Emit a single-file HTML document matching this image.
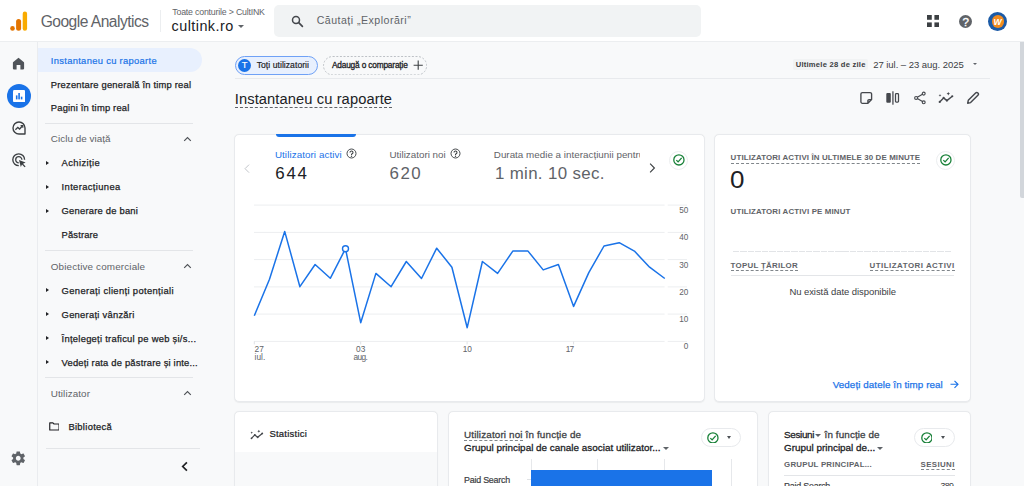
<!DOCTYPE html>
<html lang="ro">
<head>
<meta charset="utf-8">
<title>Google Analytics</title>
<style>
*{box-sizing:border-box;margin:0;padding:0}
html,body{width:1024px;height:486px;overflow:hidden;background:#f8f9fa;font-family:"Liberation Sans",sans-serif;color:#202124}
body{position:relative}
.abs{position:absolute}
.t{position:absolute;white-space:nowrap;line-height:1}
#hdr{position:absolute;left:0;top:0;width:1024px;height:42px;background:#fff;border-bottom:1px solid #eceef0}
#search{position:absolute;left:273.5px;top:5px;width:427px;height:32px;background:#f1f3f4;border-radius:5px}
#rail{position:absolute;left:0;top:42px;width:38px;height:444px;background:#f8f9fa;border-right:1px solid #eaecef}
#nav{position:absolute;left:38px;top:42px;width:196px;height:444px;background:#f8f9fa}
.sel{position:absolute;left:38px;top:48px;width:164px;height:24px;background:#e8f0fe;border-radius:0 12px 12px 0}
.hr{position:absolute;height:1px;background:#e3e5e8}
.tri{position:absolute;width:0;height:0;border-left:3.3px solid #202124;border-top:2.7px solid transparent;border-bottom:2.7px solid transparent}
.dn{position:absolute;width:0;height:0;border-top:3.2px solid #5f6368;border-left:3.1px solid transparent;border-right:3.1px solid transparent}
.card{position:absolute;background:#fff;border:1px solid #e8eaed;border-radius:5px;box-shadow:0 0.5px 1px rgba(60,64,67,.07)}
.dash{position:absolute;height:0;border-top:1px dashed #80868b}
.pill{position:absolute;border-radius:10px;border:1px solid #e8eaed;background:#fff}
.ck{position:absolute;width:19px;height:19px;border-radius:50%;border:1px solid #eceef0;background:#fff}
#sbt{position:absolute;left:1020.3px;top:42.4px;width:3.7px;height:156px;background:#d2d6db;border-radius:0 0 0 2px}
</style>
</head>
<body>

<div id="hdr">
  <svg class="abs" style="left:10px;top:11px" width="18" height="20" viewBox="0 0 18 20">
    <rect x="12.7" y="0.6" width="4.4" height="19.2" rx="2.2" fill="#f9ab00"/>
    <rect x="6.1" y="8" width="5" height="11.8" rx="2.5" fill="#e37400"/>
    <circle cx="2.5" cy="17.4" r="2.3" fill="#e37400"/>
  </svg>
  <div class="t" style="top:14px;font-size:15.6px;color:#5f6368;left:40.70px;letter-spacing:-0.524px;">Google Analytics</div>
  <div class="abs" style="left:160px;top:10px;width:1px;height:22px;background:#eceef0"></div>
  <div class="t" style="top:8px;font-size:8.8px;color:#5f6368;left:172.30px;letter-spacing:-0.203px;">Toate conturile &gt; CultINK</div>
  <div class="t" style="top:19px;font-size:14.4px;color:#202124;left:171.60px;letter-spacing:0.445px;">cultink.ro</div>
  <div class="dn" style="left:237.5px;top:24.9px"></div>
  <div id="search"></div>
  <svg class="abs" style="left:291px;top:15px" width="13" height="13" viewBox="0 0 13 13"><circle cx="5" cy="5" r="3.5" fill="none" stroke="#44474c" stroke-width="1.5"/><path d="M7.7 7.7 L11.4 11.4" stroke="#44474c" stroke-width="1.7" stroke-linecap="round"/></svg>
  <div class="t" style="top:15px;font-size:10.6px;color:#5f6368;left:316.70px;letter-spacing:0.479px;">Căutați „Explorări”</div>
  <svg class="abs" style="left:927.2px;top:15.3px" width="12.2" height="12.2" viewBox="0 0 12 12"><g fill="#3c4043"><rect x="0" y="0" width="4.7" height="4.7"/><rect x="7.3" y="0" width="4.7" height="4.7"/><rect x="0" y="7.3" width="4.7" height="4.7"/><rect x="7.3" y="7.3" width="4.7" height="4.7"/></g></svg>
  <div class="abs" style="left:958.6px;top:14.5px;width:13.6px;height:13.6px;border-radius:50%;background:#5f6368"></div>
  <div class="t" style="top:16px;font-size:11.6px;color:#fff;left:962.40px;-webkit-text-stroke:0.35px #fff;">?</div>
  <div class="abs" style="left:987.8px;top:11.6px;width:19.4px;height:19.4px;border-radius:50%;background:#1b5aa6"></div>
  <div class="abs" style="left:991.6px;top:15.2px;width:12.6px;height:12.6px;border-radius:50%;background:#f28b1e"></div>
  <div class="t" style="top:18px;font-size:8.6px;color:#fff;left:993.60px;font-weight:bold;font-style:italic;">W</div>
</div>

<div id="rail"></div><div id="nav"></div><div class="sel"></div>
<svg class="abs" style="left:12px;top:56.8px" width="13" height="13" viewBox="0 0 13 13"><path d="M0.9 5.9 Q0.9 5.4 1.3 5.1 L6.5 0.7 L11.7 5.1 Q12.1 5.4 12.1 5.9 V11.6 Q12.1 12.4 11.3 12.4 H8.4 V8 H4.6 V12.4 H1.7 Q0.9 12.4 0.9 11.6 Z" fill="#50545a"/></svg>
<div class="abs" style="left:6.5px;top:84px;width:24px;height:24px;border-radius:50%;background:#1a73e8"></div>
<svg class="abs" style="left:12.9px;top:89.9px" width="12.2" height="12.2" viewBox="0 0 12.2 12.2"><rect x="0" y="0" width="12.2" height="12.2" rx="1.4" fill="#fff"/><rect x="2.9" y="5.4" width="1.6" height="4" fill="#1a73e8"/><rect x="5.3" y="3" width="1.6" height="6.4" fill="#1a73e8"/><rect x="7.8" y="6.7" width="1.6" height="2.7" fill="#1a73e8"/></svg>
<svg class="abs" style="left:11.5px;top:121px" width="14.5" height="14" viewBox="0 0 14.5 14"><path d="M7 1 A6 6 0 1 0 7 13 H13 V7 A6 6 0 0 0 7 1 Z" fill="none" stroke="#3c4043" stroke-width="1.4" stroke-linejoin="round"/><path d="M3.4 8.8 L5.8 6.4 L7.6 8 L10.4 5" fill="none" stroke="#3c4043" stroke-width="1.3"/><path d="M8.6 4.6 H10.8 V6.8" fill="none" stroke="#3c4043" stroke-width="1.2"/></svg>
<svg class="abs" style="left:11.5px;top:152.6px" width="15" height="15" viewBox="0 0 15 15"><path d="M12.6 6.8 A5.9 5.9 0 1 0 6.8 12.6" fill="none" stroke="#3c4043" stroke-width="1.35"/><path d="M9.9 6.8 A3.1 3.1 0 1 0 6.8 9.9" fill="none" stroke="#3c4043" stroke-width="1.3"/><path d="M7 7 L13.6 9.4 L11 10.7 L13.6 13.4 L12.6 14.3 L10 11.6 L8.8 14 Z" fill="#3c4043"/></svg>
<svg class="abs" style="left:10.45px;top:450px" width="16.5" height="16.5" viewBox="0 0 24 24"><path fill="#5f6368" d="M19.43 12.98c.04-.32.07-.64.07-.98s-.03-.66-.07-.98l2.11-1.65c.19-.15.24-.42.12-.64l-2-3.46c-.12-.22-.39-.3-.61-.22l-2.49 1c-.52-.4-1.08-.73-1.69-.98l-.38-2.65C14.46 2.18 14.25 2 14 2h-4c-.25 0-.46.18-.49.42l-.38 2.65c-.61.25-1.17.59-1.69.98l-2.49-1c-.23-.09-.49 0-.61.22l-2 3.46c-.13.22-.07.49.12.64l2.11 1.65c-.04.32-.07.65-.07.98s.03.66.07.98l-2.11 1.65c-.19.15-.24.42-.12.64l2 3.46c.12.22.39.3.61.22l2.49-1c.52.4 1.08.73 1.69.98l.38 2.65c.03.24.24.42.49.42h4c.25 0 .46-.18.49-.42l.38-2.65c.61-.25 1.17-.59 1.69-.98l2.49 1c.23.09.49 0 .61-.22l2-3.46c.12-.22.07-.49-.12-.64l-2.11-1.65zM12 15.5c-1.93 0-3.5-1.57-3.5-3.5s1.570-3.500 3.500-3.500 3.500 1.570 3.500 3.500-1.570 3.500-3.500 3.500z"/></svg>

<div class="t" style="top:56px;font-size:9.4px;color:#1a73e8;left:50.80px;letter-spacing:0.312px;-webkit-text-stroke:0.2px #1a73e8;">Instantaneu cu rapoarte</div>
<div class="t" style="top:80px;font-size:9.4px;color:#202124;left:50.80px;letter-spacing:0.202px;-webkit-text-stroke:0.25px #202124;">Prezentare generală în timp real</div>
<div class="t" style="top:103px;font-size:9.4px;color:#202124;left:50.80px;letter-spacing:0.192px;-webkit-text-stroke:0.25px #202124;">Pagini în timp real</div>
<div class="hr" style="left:45px;top:123px;width:148px"></div>
<div class="t" style="top:134px;font-size:9.9px;color:#5f6368;left:50.80px;letter-spacing:0.032px;">Ciclu de viață</div>
<svg class="abs" style="left:183px;top:135.8px" width="9" height="6" viewBox="0 0 9 6"><path d="M1.2 4.9 L4.5 1.6 L7.8 4.9" fill="none" stroke="#4d5156" stroke-width="1.15"/></svg>
<div class="tri" style="left:46.2px;top:160.7px"></div><div class="t" style="top:158px;font-size:9.4px;color:#202124;left:61.60px;letter-spacing:0.410px;-webkit-text-stroke:0.25px #202124;">Achiziție</div>
<div class="tri" style="left:46.2px;top:184.6px"></div><div class="t" style="top:182px;font-size:9.4px;color:#202124;left:61.60px;letter-spacing:0.365px;-webkit-text-stroke:0.25px #202124;">Interacțiunea</div>
<div class="tri" style="left:46.2px;top:208.6px"></div><div class="t" style="top:206px;font-size:9.4px;color:#202124;left:61.60px;letter-spacing:0.222px;-webkit-text-stroke:0.25px #202124;">Generare de bani</div>
<div class="t" style="top:230px;font-size:9.4px;color:#202124;left:61.60px;letter-spacing:0.152px;-webkit-text-stroke:0.25px #202124;">Păstrare</div>
<div class="hr" style="left:45px;top:250px;width:148px"></div>
<div class="t" style="top:262px;font-size:9.9px;color:#5f6368;left:50.80px;letter-spacing:0.139px;">Obiective comerciale</div>
<svg class="abs" style="left:183px;top:263.1px" width="9" height="6" viewBox="0 0 9 6"><path d="M1.2 4.9 L4.5 1.6 L7.8 4.9" fill="none" stroke="#4d5156" stroke-width="1.15"/></svg>
<div class="tri" style="left:46.2px;top:288.2px"></div><div class="t" style="top:286px;font-size:9.4px;color:#202124;left:61.60px;letter-spacing:0.359px;-webkit-text-stroke:0.25px #202124;">Generați clienți potențiali</div>
<div class="tri" style="left:46.2px;top:312.2px"></div><div class="t" style="top:310px;font-size:9.4px;color:#202124;left:61.60px;letter-spacing:0.260px;-webkit-text-stroke:0.25px #202124;">Generați vânzări</div>
<div class="tri" style="left:46.2px;top:336.2px"></div><div class="t" style="top:334px;font-size:9.4px;color:#202124;left:61.60px;letter-spacing:0.267px;-webkit-text-stroke:0.25px #202124;">Înțelegeți traficul pe web și/s...</div>
<div class="tri" style="left:46.2px;top:360.1px"></div><div class="t" style="top:358px;font-size:9.4px;color:#202124;left:61.60px;letter-spacing:0.192px;-webkit-text-stroke:0.25px #202124;">Vedeți rata de păstrare și inte...</div>
<div class="hr" style="left:45px;top:377px;width:148px"></div>
<div class="t" style="top:389px;font-size:9.9px;color:#5f6368;left:50.80px;letter-spacing:0.086px;">Utilizator</div>
<svg class="abs" style="left:183px;top:390.1px" width="9" height="6" viewBox="0 0 9 6"><path d="M1.2 4.9 L4.5 1.6 L7.8 4.9" fill="none" stroke="#4d5156" stroke-width="1.15"/></svg>
<svg class="abs" style="left:48.7px;top:421.7px" width="10.8" height="8.9" viewBox="0 0 11.6 9.4"><path d="M0.8 0.9 H4.2 L5.4 2.1 H10.8 V8.5 H0.8 Z" fill="none" stroke="#202124" stroke-width="1.25" stroke-linejoin="round"/></svg>
<div class="t" style="top:422px;font-size:9.4px;color:#202124;left:68.40px;letter-spacing:0.305px;-webkit-text-stroke:0.25px #202124;">Bibliotecă</div>
<div class="hr" style="left:46px;top:448px;width:154px"></div>
<svg class="abs" style="left:179.5px;top:461.4px" width="9" height="11" viewBox="0 0 9 11"><path d="M6.9 1.3 L2.7 5.5 L6.9 9.7" fill="none" stroke="#202124" stroke-width="1.7"/></svg>

<div class="abs" style="left:234.5px;top:55.6px;width:83.4px;height:19.4px;border:1px solid #6fa1f6;background:#e8f0fe;border-radius:10px"></div>
<div class="abs" style="left:237.7px;top:58.7px;width:13.3px;height:13.3px;border-radius:50%;background:#1a73e8"></div>
<div class="t" style="top:60px;font-size:9.4px;color:#fff;left:241.80px;-webkit-text-stroke:0.15px #fff;">T</div>
<div class="t" style="top:61px;font-size:8.6px;color:#202124;left:256.70px;letter-spacing:0.044px;-webkit-text-stroke:0.18px #202124;">Toți utilizatorii</div>
<svg class="abs" style="left:323.2px;top:55.6px" width="104.2" height="19.4" viewBox="0 0 104.2 19.4"><rect x="0.5" y="0.5" width="103.2" height="18.4" rx="9.2" fill="none" stroke="#bdc1c6" stroke-width="1" stroke-dasharray="2 1.6"/></svg>
<div class="t" style="top:61px;font-size:8.3px;color:#202124;left:331.90px;letter-spacing:-0.165px;-webkit-text-stroke:0.3px #202124;">Adaugă o comparație</div>
<svg class="abs" style="left:412.6px;top:59.9px" width="10.4" height="10.4" viewBox="0 0 10.4 10.4"><path d="M5.2 0.6 V9.8 M0.6 5.2 H9.8" stroke="#3c4043" stroke-width="1.1"/></svg>
<div class="abs" style="left:793px;top:59.2px;width:75px;height:10.6px;background:#f1f3f4;border-radius:2px"></div>
<div class="t" style="top:61px;font-size:7.6px;color:#3c4043;left:795.70px;letter-spacing:0.238px;font-weight:bold;">Ultimele 28 de zile</div>
<div class="t" style="top:60px;font-size:9.5px;color:#3c4043;left:873.20px;letter-spacing:-0.038px;">27 iul. – 23 aug. 2025</div>
<div class="dn" style="left:973.2px;top:63.2px;border-top-width:2.9px;border-left-width:2.7px;border-right-width:2.7px"></div>
<div class="hr" style="left:235px;top:78px;width:755px;background:#e8eaed"></div>
<div class="t" style="top:92px;font-size:14.7px;color:#202124;left:234.80px;letter-spacing:0.093px;">Instantaneu cu rapoarte</div>
<div class="dash" style="left:235px;top:107px;width:157px;border-top-color:#5f6368"></div>
<svg class="abs" style="left:859px;top:91px" width="15" height="15" viewBox="0 0 15 15"><path d="M3.4 1.6 H11.1 a1.5 1.5 0 0 1 1.5 1.5 V8.6 L8.9 12.3 H3.4 a1.5 1.5 0 0 1 -1.5 -1.5 V3.1 a1.5 1.5 0 0 1 1.5 -1.5 Z M12.6 8.6 H10 a1.1 1.1 0 0 0 -1.1 1.1 V12.3" fill="none" stroke="#45484d" stroke-width="1.35" stroke-linejoin="round"/></svg>
<svg class="abs" style="left:885px;top:91px" width="16" height="14" viewBox="0 0 16 14"><rect x="1.3" y="2" width="4.5" height="9.7" rx="1" fill="#45484d"/><rect x="7.3" y="0.3" width="1.25" height="13.4" fill="#45484d"/><rect x="10.5" y="2.6" width="3" height="8.5" rx="0.8" fill="none" stroke="#45484d" stroke-width="1.25"/></svg>
<svg class="abs" style="left:913px;top:91px" width="15" height="14" viewBox="0 0 15 14"><path d="M9.5 3.3 L4.3 6.3 M4.3 7.6 L9.5 10.6" fill="none" stroke="#45484d" stroke-width="1.2"/><circle cx="10.7" cy="2.6" r="1.45" fill="none" stroke="#45484d" stroke-width="1.15"/><circle cx="3.1" cy="6.95" r="1.45" fill="none" stroke="#45484d" stroke-width="1.15"/><circle cx="10.7" cy="11.3" r="1.45" fill="none" stroke="#45484d" stroke-width="1.15"/></svg>
<svg class="abs" style="left:938px;top:91px" width="17" height="14" viewBox="0 0 17 14"><path d="M1.7 10.9 L5.6 6.9 L8.9 9.6 L14.3 5.2" fill="none" stroke="#45484d" stroke-width="1.4" stroke-linejoin="round"/><circle cx="1.7" cy="10.9" r="1.05" fill="#45484d"/><circle cx="5.6" cy="6.9" r="1.05" fill="#45484d"/><circle cx="8.9" cy="9.6" r="1.05" fill="#45484d"/><circle cx="14.3" cy="5.2" r="1.05" fill="#45484d"/><path d="M2 2.9 l.45 1 1 .45 -1 .45 -.45 1 -.45-1 -1-.45 1-.45z M10.3 0.9 l.55 1.2 1.2.55 -1.2.55 -.55 1.2 -.55-1.2 -1.2-.55 1.2-.55z" fill="#45484d"/></svg>
<svg class="abs" style="left:966px;top:91px" width="14" height="14" viewBox="0 0 14 14"><path d="M1.7 12.2 L2.3 9.3 L9.6 2 A1.6 1.6 0 0 1 11.9 4.3 L4.6 11.6 Z" fill="none" stroke="#45484d" stroke-width="1.45" stroke-linejoin="round"/></svg>

<div class="card" style="left:234px;top:134px;width:470.5px;height:267.5px"></div>
<div class="abs" style="left:275.6px;top:134.4px;width:80.2px;height:3px;background:#1a73e8;border-radius:0 0 3px 3px"></div>
<svg class="abs" style="left:243.6px;top:163.8px" width="6" height="9.3" viewBox="0 0 6.4 10"><path d="M5.4 0.7 L1.1 5 L5.4 9.3" fill="none" stroke="#bdc1c6" stroke-width="1"/></svg>
<div class="t" style="top:150px;font-size:9.8px;color:#1a73e8;left:274.90px;letter-spacing:0.087px;">Utilizatori activi</div>
<svg class="abs" style="left:346.0px;top:148.4px" width="11" height="11" viewBox="0 0 11 11"><circle cx="5.5" cy="5.5" r="4.5" fill="none" stroke="#3c4043" stroke-width="0.95"/><path d="M4 4.5 A1.5 1.5 0 1 1 5.9 5.9 Q5.5 6.2 5.5 6.9" fill="none" stroke="#3c4043" stroke-width="1.1"/><circle cx="5.5" cy="8.3" r="0.7" fill="#3c4043"/></svg>
<div class="t" style="top:166px;font-size:16.9px;color:#202124;left:275.20px;letter-spacing:1.806px;">644</div>
<div class="t" style="top:150px;font-size:9.8px;color:#5f6368;left:389.50px;letter-spacing:0.008px;">Utilizatori noi</div>
<svg class="abs" style="left:450.1px;top:148.4px" width="11" height="11" viewBox="0 0 11 11"><circle cx="5.5" cy="5.5" r="4.5" fill="none" stroke="#3c4043" stroke-width="0.95"/><path d="M4 4.5 A1.5 1.5 0 1 1 5.9 5.9 Q5.5 6.2 5.5 6.9" fill="none" stroke="#3c4043" stroke-width="1.1"/><circle cx="5.5" cy="8.3" r="0.7" fill="#3c4043"/></svg>
<div class="t" style="top:166px;font-size:16.9px;color:#5f6368;left:389.50px;letter-spacing:1.506px;">620</div>
<div class="abs" style="left:480px;top:146px;width:160.3px;height:16px;overflow:hidden"><div class="t" style="top:4px;font-size:9.8px;color:#5f6368;left:13.80px;letter-spacing:0.022px;">Durata medie a interacțiunii pentru</div></div>
<div class="t" style="top:166px;font-size:16.9px;color:#5f6368;left:494.90px;letter-spacing:0.334px;">1 min. 10 sec.</div>
<svg class="abs" style="left:649.4px;top:163.3px" width="6.6" height="10" viewBox="0 0 6.6 10"><path d="M1.1 0.7 L5.4 5 L1.1 9.3" fill="none" stroke="#3c4043" stroke-width="1.15"/></svg>
<div class="ck" style="left:669.2px;top:150.7px"></div><svg class="abs" style="left:673.20px;top:154.30px" width="11.8" height="11.8" viewBox="0 0 12 12"><circle cx="6" cy="6" r="5.2" fill="none" stroke="#188038" stroke-width="1.3"/><path d="M3.4 6.2 L5.2 8 L8.8 3.9" fill="none" stroke="#188038" stroke-width="1.35"/></svg>
<svg class="abs" style="left:235px;top:195px" width="470" height="180" viewBox="235 195 470 180">
  <g stroke="#eceef0" stroke-width="1"><path d="M254 205.1 H664.6 M667.7 205.1 H687"/><path d="M254 232.4 H664.6 M667.7 232.4 H687"/><path d="M254 259.6 H664.6 M667.7 259.6 H687"/><path d="M254 286.9 H664.6 M667.7 286.9 H687"/><path d="M254 314.1 H664.6 M667.7 314.1 H687"/><path d="M254 341.4 H664.6 M667.7 341.4 H687"/></g>
  <g stroke="#e0e2e5" stroke-width="1"><path d="M254.3 341.4 V344.4 M360.7 341.4 V344.4 M467.1 341.4 V344.4 M573.6 341.4 V344.4"/></g>
  <polyline fill="none" stroke="#1a73e8" stroke-width="1.5" stroke-linejoin="round" points="254.3,315.8 269.5,279.3 284.7,231.4 299.9,286.7 315.1,264.5 330.3,278.3 345.5,248.7 360.7,322.7 375.9,273.4 391.1,286.7 406.3,261.5 421.5,278.5 436.7,248.2 451.9,267.2 467.2,327.7 482.4,261.5 497.6,273.4 512.8,251.1 528.0,251.1 543.2,269.9 558.4,264.5 573.6,306.4 588.8,272.6 604.0,246 619.2,242.7 634.4,251.1 649.6,267.2 664.8,278.5"/>
  <circle cx="345.5" cy="248.7" r="3" fill="#fff" stroke="#1a73e8" stroke-width="1.4"/>
</svg>
<div class="t" style="top:207px;font-size:8.2px;color:#5f6368;left:679.29px;">50</div><div class="t" style="top:234px;font-size:8.2px;color:#5f6368;left:679.29px;">40</div><div class="t" style="top:262px;font-size:8.2px;color:#5f6368;left:679.29px;">30</div><div class="t" style="top:289px;font-size:8.2px;color:#5f6368;left:679.29px;">20</div><div class="t" style="top:316px;font-size:8.2px;color:#5f6368;left:679.29px;">10</div><div class="t" style="top:343px;font-size:8.2px;color:#5f6368;left:683.84px;">0</div>
<div class="t" style="top:345px;font-size:8.3px;color:#5f6368;left:254.60px;">27</div><div class="t" style="top:353px;font-size:8.3px;color:#5f6368;left:254.60px;">iul.</div>
<div class="t" style="top:345px;font-size:8.3px;color:#5f6368;left:360.70px;transform:translateX(-50%);">03</div><div class="t" style="top:353px;font-size:8.3px;color:#5f6368;left:353.40px;letter-spacing:-0.552px;">aug.</div>
<div class="t" style="top:345px;font-size:8.3px;color:#5f6368;left:467.30px;transform:translateX(-50%);">10</div><div class="t" style="top:345px;font-size:8.3px;color:#5f6368;left:565.80px;letter-spacing:-0.934px;">17</div>

<div class="card" style="left:714.4px;top:134px;width:256.6px;height:267.5px"></div>
<div class="t" style="top:154px;font-size:7.9px;color:#5f6368;left:730.60px;letter-spacing:0.135px;font-weight:bold;">UTILIZATORI ACTIVI ÎN ULTIMELE 30 DE MINUTE</div>
<div class="dash" style="left:731px;top:163px;width:189px"></div>
<div class="ck" style="left:936.3px;top:150.7px"></div><svg class="abs" style="left:940.20px;top:154.30px" width="11.8" height="11.8" viewBox="0 0 12 12"><circle cx="6" cy="6" r="5.2" fill="none" stroke="#188038" stroke-width="1.3"/><path d="M3.4 6.2 L5.2 8 L8.8 3.9" fill="none" stroke="#188038" stroke-width="1.35"/></svg>
<div class="t" style="top:169px;font-size:23.6px;color:#202124;left:730.40px;transform:scaleX(1.1);transform-origin:0 0;">0</div>
<div class="t" style="top:208px;font-size:7.9px;color:#5f6368;left:730.60px;letter-spacing:0.145px;font-weight:bold;">UTILIZATORI ACTIVI PE MINUT</div>
<div class="abs" style="left:733px;top:251px;width:219px;height:1px;background:repeating-linear-gradient(90deg,#e2e4e7 0 6.3px,transparent 6.3px 7.3px)"></div>
<div class="t" style="top:262px;font-size:7.9px;color:#5f6368;left:730.60px;letter-spacing:0.273px;font-weight:bold;">TOPUL ȚĂRILOR</div>
<div class="dash" style="left:731px;top:270px;width:67px"></div>
<div class="t" style="top:262px;font-size:7.9px;color:#5f6368;left:869.50px;letter-spacing:0.510px;font-weight:bold;">UTILIZATORI ACTIVI</div>
<div class="dash" style="left:869.5px;top:270px;width:85px"></div>
<div class="hr" style="left:730.6px;top:275px;width:223.8px;background:#e3e5e8"></div>
<div class="t" style="top:287px;font-size:9.5px;color:#3c4043;left:789.40px;letter-spacing:-0.067px;">Nu există date disponibile</div>
<div class="t" style="top:380px;font-size:9.8px;color:#1a73e8;left:832.70px;letter-spacing:0.090px;-webkit-text-stroke:0.25px #1a73e8;">Vedeți datele în timp real</div>
<svg class="abs" style="left:949.6px;top:380.2px" width="9" height="8.6" viewBox="0 0 9 8.6"><path d="M0.5 4.3 H7.6 M4.5 0.8 L8 4.3 L4.5 7.8" fill="none" stroke="#1a73e8" stroke-width="1.15"/></svg>

<div class="card" style="left:234px;top:411px;width:204px;height:90px;overflow:hidden"><div class="abs" style="left:0;top:40px;width:203px;height:50px;background:#f8f9fa"></div></div>
<svg class="abs" style="left:250.4px;top:428.9px" width="14.6" height="12" viewBox="0 0 17 14"><path d="M1.7 10.9 L5.6 6.9 L8.9 9.6 L14.3 5.2" fill="none" stroke="#45484d" stroke-width="1.4" stroke-linejoin="round"/><circle cx="1.7" cy="10.9" r="1.05" fill="#45484d"/><circle cx="5.6" cy="6.9" r="1.05" fill="#45484d"/><circle cx="8.9" cy="9.6" r="1.05" fill="#45484d"/><circle cx="14.3" cy="5.2" r="1.05" fill="#45484d"/><path d="M2 2.9 l.45 1 1 .45 -1 .45 -.45 1 -.45-1 -1-.45 1-.45z M10.3 0.9 l.55 1.2 1.2.55 -1.2.55 -.55 1.2 -.55-1.2 -1.2-.55 1.2-.55z" fill="#45484d"/></svg>
<div class="t" style="top:429px;font-size:9.5px;color:#202124;left:269.40px;letter-spacing:0.236px;-webkit-text-stroke:0.22px #202124;">Statistici</div>

<div class="card" style="left:447.6px;top:411px;width:310px;height:90px"></div>
<div class="t" style="top:430px;font-size:9.9px;color:#3c4043;left:464.00px;letter-spacing:0.144px;-webkit-text-stroke:0.28px #3c4043;">Utilizatori noi în funcție de</div>
<div class="dash" style="left:464px;top:439.5px;width:59px"></div>
<div class="t" style="top:443px;font-size:9.9px;color:#202124;left:464.00px;letter-spacing:0.011px;-webkit-text-stroke:0.28px #202124;">Grupul principal de canale asociat utilizator...</div>
<div class="dn" style="left:663.2px;top:447px"></div>
<div class="pill" style="left:700.8px;top:428px;width:40.4px;height:18.6px"></div><svg class="abs" style="left:706.80px;top:431.60px" width="11.8" height="11.8" viewBox="0 0 12 12"><circle cx="6" cy="6" r="5.2" fill="none" stroke="#188038" stroke-width="1.3"/><path d="M3.4 6.2 L5.2 8 L8.8 3.9" fill="none" stroke="#188038" stroke-width="1.35"/></svg>
<div class="dn" style="left:727.4px;top:435.8px;border-top-color:#4d5156;border-top-width:3px;border-left-width:2.9px;border-right-width:2.9px"></div>
<div class="abs" style="left:530.6px;top:458.6px;width:1px;height:28px;background:#e6e8eb"></div>
<div class="abs" style="left:597.3px;top:458.6px;width:1px;height:28px;background:#e6e8eb"></div>
<div class="abs" style="left:664.4px;top:458.6px;width:1px;height:28px;background:#e6e8eb"></div>
<div class="abs" style="left:731.2px;top:458.6px;width:1px;height:28px;background:#e6e8eb"></div>
<div class="abs" style="left:526.6px;top:479.4px;width:4px;height:1px;background:#e0e2e5"></div>
<div class="abs" style="left:531px;top:470px;width:181.2px;height:17px;background:#1a73e8"></div>
<div class="t" style="top:476px;font-size:8.9px;color:#3c4043;left:464.00px;letter-spacing:-0.216px;-webkit-text-stroke:0.2px #3c4043;">Paid Search</div>

<div class="card" style="left:767.6px;top:411px;width:203.4px;height:90px"></div>
<div class="t" style="top:430px;font-size:9.9px;color:#202124;left:784.10px;letter-spacing:-0.348px;-webkit-text-stroke:0.28px #202124;">Sesiuni</div>
<div class="dn" style="left:815.3px;top:434.1px"></div>
<div class="t" style="top:430px;font-size:9.9px;color:#3c4043;left:824.60px;letter-spacing:0.099px;-webkit-text-stroke:0.28px #3c4043;">în funcție de</div>
<div class="t" style="top:443px;font-size:9.9px;color:#202124;left:784.10px;-webkit-text-stroke:0.28px #202124;">Grupul principal de...</div>
<div class="dn" style="left:877.1px;top:447px"></div>
<div class="pill" style="left:914.4px;top:428px;width:40.4px;height:18.6px"></div><svg class="abs" style="left:920.50px;top:431.60px" width="11.8" height="11.8" viewBox="0 0 12 12"><circle cx="6" cy="6" r="5.2" fill="none" stroke="#188038" stroke-width="1.3"/><path d="M3.4 6.2 L5.2 8 L8.8 3.9" fill="none" stroke="#188038" stroke-width="1.35"/></svg>
<div class="dn" style="left:941px;top:435.8px;border-top-color:#4d5156;border-top-width:3px;border-left-width:2.9px;border-right-width:2.9px"></div>
<div class="t" style="top:461px;font-size:7.9px;color:#5f6368;left:784.10px;letter-spacing:0.206px;font-weight:bold;">GRUPUL PRINCIPAL...</div>
<div class="t" style="top:461px;font-size:7.9px;color:#5f6368;left:920.60px;letter-spacing:0.370px;font-weight:bold;">SESIUNI</div>
<div class="dash" style="left:920.6px;top:469px;width:34px"></div>
<div class="hr" style="left:784px;top:474.5px;width:170.5px;background:#e3e5e8"></div>
<div class="t" style="top:482px;font-size:8.9px;color:#3c4043;left:784.10px;letter-spacing:-0.216px;-webkit-text-stroke:0.2px #3c4043;">Paid Search</div>
<div class="t" style="top:482px;font-size:8.9px;color:#3c4043;left:940.40px;letter-spacing:-0.606px;">389</div>

<div id="sbt"></div>
</body>
</html>
